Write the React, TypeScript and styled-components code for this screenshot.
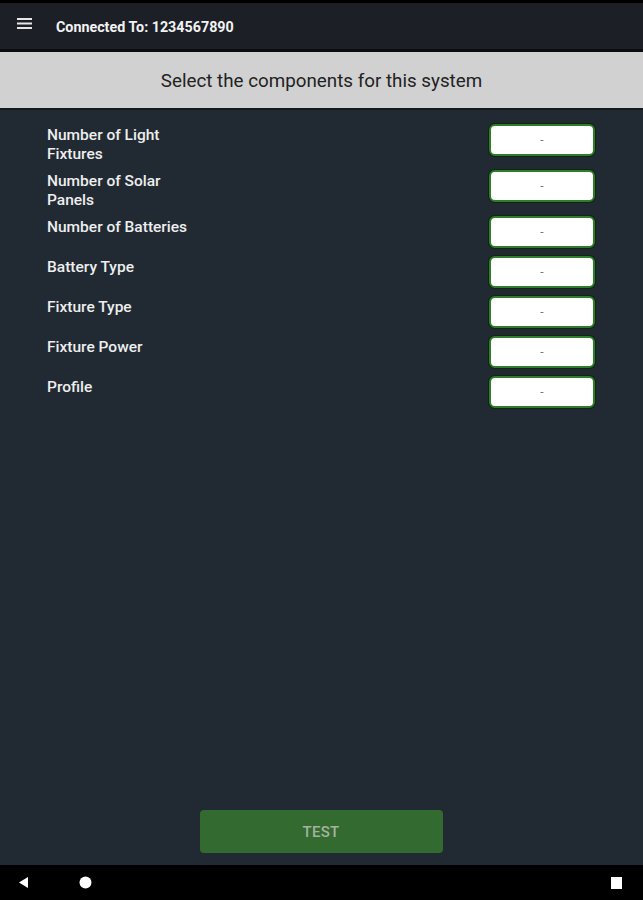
import React from "react";
import styled, { createGlobalStyle } from "styled-components";

const GlobalStyle = createGlobalStyle`
  html, body {
    margin: 0;
    padding: 0;
    background: #000;
  }
  * {
    box-sizing: border-box;
  }
`;

const Screen = styled.div`
  width: 643px;
  height: 900px;
  display: flex;
  flex-direction: column;
  background: #212a33;
  font-family: Roboto, "Noto Sans", sans-serif;
  border-top: 3px solid #000;
`;

const Toolbar = styled.div`
  height: 49px;
  display: flex;
  align-items: center;
  gap: 24px;
  padding: 2px 0 0 17px;
  background: #1c2026;
  border-bottom: 3px solid #0b0d10;
`;

const MenuButton = styled.div`
  width: 15px;
  height: 11px;
  display: flex;
  margin-top: -7px;
`;

const ToolbarTitle = styled.span`
  color: #f2f2f2;
  font-size: 14.3px;
  font-weight: 700;
`;

const Header = styled.div`
  height: 58px;
  display: flex;
  align-items: center;
  justify-content: center;
  background: #d1d1d1;
  border-bottom: 2px solid #15191d;
  color: #222;
  font-size: 18.8px;
  padding-top: 2px;
`;

const Content = styled.div`
  flex: 1;
  display: flex;
  flex-direction: column;
  padding: 14px 48px 12px 47px;
`;

const Rows = styled.div`
  display: flex;
  flex-direction: column;
  gap: 8px;
  flex: 1;
`;

const Row = styled.div`
  display: flex;
  align-items: flex-start;
  justify-content: space-between;
`;

const Label = styled.div`
  width: 150px;
  margin: 2px 0 -2px;
  color: #eeeeee;
  font-size: 15.5px;
  font-weight: 500;
  line-height: 19px;
`;

const ValueBox = styled.div`
  width: 106px;
  height: 32px;
  display: flex;
  align-items: center;
  justify-content: center;
  background: #fff;
  border: 2px solid #2e7d2a;
  border-radius: 6px;
  box-shadow: 0 0 0 1px #10260f;
  color: #777;
  font-size: 12px;
`;

const ButtonBar = styled.div`
  display: flex;
  justify-content: center;
`;

const TestButton = styled.button`
  width: 243px;
  height: 43px;
  border: none;
  border-radius: 4px;
  background: #336a30;
  color: #a3b39f;
  font-family: Roboto, "Noto Sans", sans-serif;
  font-size: 15px;
  font-weight: 500;
  letter-spacing: 0.3px;
`;

const NavBar = styled.div`
  height: 35px;
  display: flex;
  align-items: center;
  padding: 0 21px 0 19px;
  background: #000;
`;

const NavLeft = styled.div`
  display: flex;
  align-items: center;
  gap: 50px;
  flex: 1;
`;

const rows = [
  "Number of Light Fixtures",
  "Number of Solar Panels",
  "Number of Batteries",
  "Battery Type",
  "Fixture Type",
  "Fixture Power",
  "Profile",
];

export default function App() {
  return (
    <>
      <GlobalStyle />
      <Screen>
        <Toolbar>
          <MenuButton>
            <svg width="15" height="11" viewBox="0 0 15 11">
              <rect x="0" y="0" width="15" height="2" fill="#e6e6e6" />
              <rect x="0" y="4.5" width="15" height="2" fill="#e6e6e6" />
              <rect x="0" y="9" width="15" height="2" fill="#e6e6e6" />
            </svg>
          </MenuButton>
          <ToolbarTitle>Connected To: 1234567890</ToolbarTitle>
        </Toolbar>
        <Header>Select the components for this system</Header>
        <Content>
          <Rows>
            {rows.map((r) => (
              <Row key={r}>
                <Label>{r}</Label>
                <ValueBox>-</ValueBox>
              </Row>
            ))}
          </Rows>
          <ButtonBar>
            <TestButton>TEST</TestButton>
          </ButtonBar>
        </Content>
        <NavBar>
          <NavLeft>
            <svg width="10" height="11" viewBox="0 0 10 11">
              <polygon points="9,0 9,11 0,5.5" fill="#fff" />
            </svg>
            <svg width="13" height="13" viewBox="0 0 13 13">
              <circle cx="6.5" cy="6.5" r="6" fill="#fff" />
            </svg>
          </NavLeft>
          <svg width="11" height="12" viewBox="0 0 11 12">
            <rect x="0" y="0" width="11" height="12" fill="#fff" />
          </svg>
        </NavBar>
      </Screen>
    </>
  );
}
